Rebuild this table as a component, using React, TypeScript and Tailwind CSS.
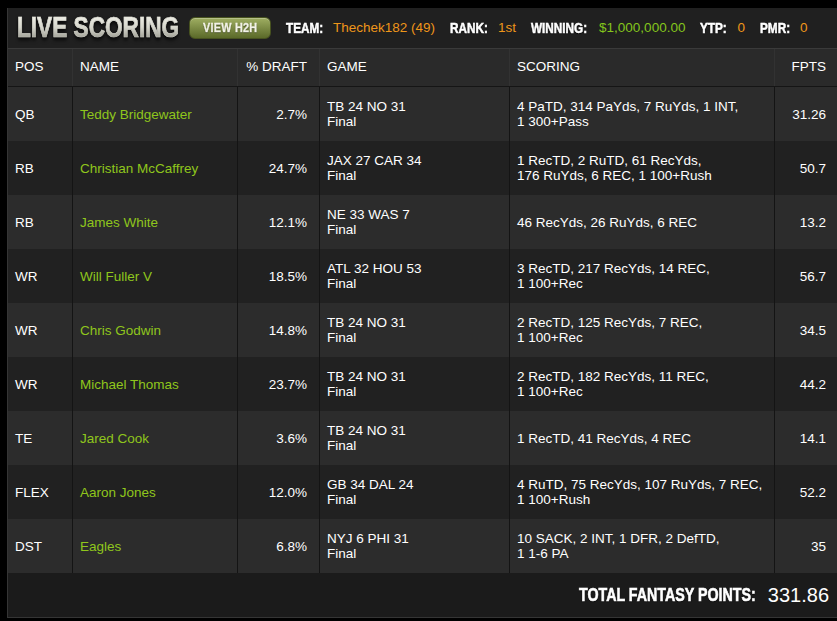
import React from 'react';

type Row = {
  pos: string;
  name: string;
  draft: string;
  game: string;
  scoring: string[];
  fpts: string;
};

const ROWS: Row[] = [
  { pos: 'QB', name: 'Teddy Bridgewater', draft: '2.7%', game: 'TB 24 NO 31', scoring: ['4 PaTD, 314 PaYds, 7 RuYds, 1 INT,', '1 300+Pass'], fpts: '31.26' },
  { pos: 'RB', name: 'Christian McCaffrey', draft: '24.7%', game: 'JAX 27 CAR 34', scoring: ['1 RecTD, 2 RuTD, 61 RecYds,', '176 RuYds, 6 REC, 1 100+Rush'], fpts: '50.7' },
  { pos: 'RB', name: 'James White', draft: '12.1%', game: 'NE 33 WAS 7', scoring: ['46 RecYds, 26 RuYds, 6 REC'], fpts: '13.2' },
  { pos: 'WR', name: 'Will Fuller V', draft: '18.5%', game: 'ATL 32 HOU 53', scoring: ['3 RecTD, 217 RecYds, 14 REC,', '1 100+Rec'], fpts: '56.7' },
  { pos: 'WR', name: 'Chris Godwin', draft: '14.8%', game: 'TB 24 NO 31', scoring: ['2 RecTD, 125 RecYds, 7 REC,', '1 100+Rec'], fpts: '34.5' },
  { pos: 'WR', name: 'Michael Thomas', draft: '23.7%', game: 'TB 24 NO 31', scoring: ['2 RecTD, 182 RecYds, 11 REC,', '1 100+Rec'], fpts: '44.2' },
  { pos: 'TE', name: 'Jared Cook', draft: '3.6%', game: 'TB 24 NO 31', scoring: ['1 RecTD, 41 RecYds, 4 REC'], fpts: '14.1' },
  { pos: 'FLEX', name: 'Aaron Jones', draft: '12.0%', game: 'GB 34 DAL 24', scoring: ['4 RuTD, 75 RecYds, 107 RuYds, 7 REC,', '1 100+Rush'], fpts: '52.2' },
  { pos: 'DST', name: 'Eagles', draft: '6.8%', game: 'NYJ 6 PHI 31', scoring: ['10 SACK, 2 INT, 1 DFR, 2 DefTD,', '1 1-6 PA'], fpts: '35' },
];

const GRID = 'grid grid-cols-[65px_165px_82px_190px_265px_1fr]';

// condensed "impact" style: bold Liberation Sans squeezed horizontally
function Squeezed({ children, box, text }: { children: React.ReactNode; box: string; text: string }) {
  return (
    <span className={`inline-block shrink-0 ${box}`}>
      <span className={`inline-block whitespace-nowrap origin-left font-bold ${text}`}>{children}</span>
    </span>
  );
}

function Stat({ label, value, color, box }: { label: string; value: string; color: string; box: string }) {
  return (
    <div className="flex items-center shrink-0">
      <Squeezed
        box={box}
        text="text-[14px] scale-x-[0.84] text-white [-webkit-text-stroke:0.5px_#fff] [text-shadow:0_1px_1px_#000]"
      >
        {label}
      </Squeezed>
      <span className={`ml-[10px] whitespace-nowrap text-[13.5px] ${color}`}>{value}</span>
    </div>
  );
}

export default function App() {
  return (
    <div className="w-[837px] h-[621px] overflow-hidden bg-black pt-[8px] pl-[7px] font-['Liberation_Sans',Arial,sans-serif] text-white">
      <div className="w-[830px] border-l border-b border-[#353535] bg-[#1b1b1b]">
        {/* title bar */}
        <div className="h-[40px] flex items-center bg-[#202020] pl-[9px]">
          <Squeezed
            box="w-[163px]"
            text="text-[29px] leading-none scale-x-[0.78] scale-y-[1.04] bg-gradient-to-b from-[#f6f6ee] via-[#d6d6cc] to-[#8a8a80] bg-clip-text text-transparent [-webkit-text-stroke:0.7px_rgba(215,215,205,0.55)] [filter:drop-shadow(0_2px_2px_rgba(0,0,0,0.9))]"
          >
            LIVE SCORING
          </Squeezed>
          <button className="ml-[9px] shrink-0 w-[82px] h-[22px] rounded-[6px] border border-[#47521f] bg-gradient-to-b from-[#9fae62] to-[#5b6a29] shadow-[inset_0_1px_0_rgba(255,255,255,0.25)] flex items-center justify-center">
            <span className="font-bold text-[12px] tracking-[0.3px] scale-x-[0.9] text-[#f2f2e6] [-webkit-text-stroke:0.3px_#f2f2e6] [text-shadow:0_1px_1px_#2c3410] whitespace-nowrap">
              VIEW H2H
            </span>
          </button>
          <div className="ml-[15px] flex items-center gap-[15px]">
            <Stat label="TEAM:" value="Thechek182 (49)" color="text-[#ee961a]" box="w-[37px]" />
            <Stat label="RANK:" value="1st" color="text-[#ee961a]" box="w-[38px]" />
            <Stat label="WINNING:" value="$1,000,000.00" color="text-[#84c51c]" box="w-[58px]" />
            <Stat label="YTP:" value="0" color="text-[#ee961a]" box="w-[27px]" />
            <Stat label="PMR:" value="0" color="text-[#ee961a]" box="w-[30px]" />
          </div>
        </div>

        {/* table head */}
        <div className={`${GRID} h-[39px] bg-[#2a2a2a] border-t border-[#3a3a3a] border-b border-b-[#151515] text-[13.5px]`}>
          <div className="flex items-center pl-[7px] border-r border-[#323232]">POS</div>
          <div className="flex items-center pl-[7px] border-r border-[#323232]">NAME</div>
          <div className="flex items-center justify-end pr-[12px] border-r border-[#323232]">% DRAFT</div>
          <div className="flex items-center pl-[7px] border-r border-[#323232]">GAME</div>
          <div className="flex items-center pl-[7px] border-r border-[#323232]">SCORING</div>
          <div className="flex items-center justify-end pr-[11px]">FPTS</div>
        </div>

        {/* rows */}
        {ROWS.map((r, i) => (
          <div
            key={r.name}
            className={`${GRID} h-[54px] text-[13.5px] leading-[15px] ${i % 2 === 0 ? 'bg-[#2c2c2c]' : 'bg-[#212121]'}`}
          >
            <div className="flex items-center pl-[7px] border-r border-[#141414]">{r.pos}</div>
            <div className="flex items-center pl-[7px] border-r border-[#141414] text-[#8fc61c]">{r.name}</div>
            <div className="flex items-center justify-end pr-[12px] border-r border-[#141414]">{r.draft}</div>
            <div className="flex flex-col justify-center pl-[7px] border-r border-[#141414]">
              <span>{r.game}</span>
              <span>Final</span>
            </div>
            <div className="flex flex-col justify-center pl-[7px] border-r border-[#141414] whitespace-nowrap">
              {r.scoring.map((s) => (
                <span key={s}>{s}</span>
              ))}
            </div>
            <div className="flex items-center justify-end pr-[11px]">{r.fpts}</div>
          </div>
        ))}

        {/* total */}
        <div className="h-[44px] flex items-center justify-end pr-[8px] bg-[#1b1b1b]">
          <Squeezed
            box="w-[177px]"
            text="text-[18.5px] scale-x-[0.77] [-webkit-text-stroke:0.6px_#fff] [text-shadow:0_1px_1px_#000]"
          >
            TOTAL FANTASY POINTS:
          </Squeezed>
          <span className="ml-[12px] text-[20px]">331.86</span>
        </div>
      </div>
    </div>
  );
}
